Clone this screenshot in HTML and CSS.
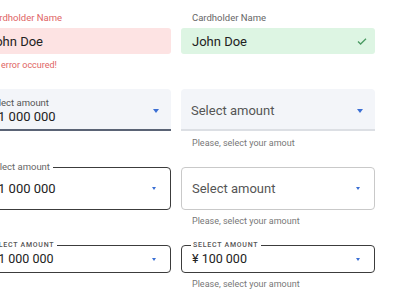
FILE: index.html
```html
<!DOCTYPE html>
<html lang="en">
<head>
    <meta charset="UTF-8" />
    <title>Input fields</title>
    <link rel="stylesheet" href="styles.css">
</head>
<body>
    <div class="sheet">
        <div class="row row-text">
            <div class="field error">
                <label class="top-label">Cardholder Name</label>
                <div class="plain-box">John Doe</div>
                <div class="helper">An error occured!</div>
            </div>
            <div class="field success">
                <label class="top-label">Cardholder Name</label>
                <div class="plain-box">
                    John Doe
                    <svg class="check" width="10" height="7" viewBox="0 0 10 7">
                        <polyline points="1,3.5 3.6,6 9,0.8" fill="none" stroke="#4b9a63" stroke-width="1.3" />
                    </svg>
                </div>
            </div>
        </div>

        <div class="row row-filled">
            <div class="field">
                <div class="filled-box active">
                    <div class="stack">
                        <span class="small-label">Select amount</span>
                        <span class="value">¥ 1 000 000</span>
                    </div>
                    <span class="arrow"></span>
                </div>
            </div>
            <div class="field">
                <div class="filled-box">
                    <span class="placeholder">Select amount</span>
                    <span class="arrow"></span>
                </div>
                <div class="helper">Please, select your amout</div>
            </div>
        </div>

        <div class="row row-outlined">
            <div class="field">
                <div class="outlined-box active">
                    <span class="notch-label">Select amount</span>
                    <span class="value">¥ 1 000 000</span>
                    <span class="arrow small"></span>
                </div>
            </div>
            <div class="field">
                <div class="outlined-box">
                    <span class="placeholder">Select amount</span>
                    <span class="arrow small"></span>
                </div>
                <div class="helper">Please, select your amount</div>
            </div>
        </div>

        <div class="row row-dense">
            <div class="field">
                <div class="outlined-box dense active">
                    <span class="notch-label caps">Select amount</span>
                    <span class="value">€ 1 000 000</span>
                    <span class="arrow small"></span>
                </div>
            </div>
            <div class="field">
                <div class="outlined-box dense active">
                    <span class="notch-label caps">Select amount</span>
                    <span class="value">¥ 100 000</span>
                    <span class="arrow small"></span>
                </div>
                <div class="helper">Please, select your amount</div>
            </div>
        </div>
    </div>
</body>
</html>
```

FILE: styles.css
```css
:root {
    --text-color: #222;
    --muted-color: #777;
    --error-color: #e06464;
    --arrow-color: #3b6fd4;
}

body {
    margin: 0;
    font-family: Roboto, Arial, sans-serif;
    color: var(--text-color);
    background: white;
    overflow: hidden;
}

.sheet {
    margin-left: -23px;
    padding-top: 12px;
    display: flex;
    flex-direction: column;
    gap: 18px;
}

.row {
    display: grid;
    grid-template-columns: 194px 194px;
    column-gap: 10px;
    align-items: start;
}

.top-label {
    display: block;
    font-size: 9.5px;
    line-height: 12px;
    color: #666;
    padding-left: 11px;
    margin-bottom: 4px;
}

.error .top-label,
.error .helper {
    color: var(--error-color);
}

.plain-box {
    height: 26px;
    border-radius: 3px;
    padding: 0 11px;
    display: flex;
    align-items: center;
    justify-content: space-between;
    font-size: 13px;
}

.error .plain-box {
    background: #fde3e3;
}

.success .plain-box {
    background: #ddf5e3;
}

.check {
    margin-right: -3px;
}

.helper {
    font-size: 9px;
    line-height: 12px;
    color: var(--muted-color);
    padding-left: 11px;
    margin-top: 5px;
}

.row-filled .helper {
    margin-top: 6px;
}

.filled-box {
    box-sizing: border-box;
    height: 42px;
    background: #f3f5f9;
    border-radius: 4px 4px 0 0;
    border-bottom: 2px solid #dcdfe4;
    padding: 3px 12px 0 10px;
    display: flex;
    align-items: center;
    justify-content: space-between;
}

.filled-box.active {
    border-bottom-color: #5a6375;
    padding-left: 11px;
}

.stack {
    display: flex;
    flex-direction: column;
}

.small-label {
    font-size: 9.5px;
    line-height: 12px;
    color: #555;
}

.value {
    font-size: 13px;
    line-height: 16px;
    color: var(--text-color);
}

.placeholder {
    font-size: 13px;
    color: #555;
}

.arrow {
    width: 0;
    height: 0;
    border-left: 3.5px solid transparent;
    border-right: 3.5px solid transparent;
    border-top: 4px solid var(--arrow-color);
}

.arrow.small {
    border-left-width: 2.5px;
    border-right-width: 2.5px;
    border-top-width: 3px;
    margin-right: 2px;
}

.outlined-box {
    position: relative;
    box-sizing: border-box;
    height: 43px;
    border: 1px solid #c9c9c9;
    border-radius: 4px;
    padding: 0 12px 0 10px;
    display: flex;
    align-items: center;
    justify-content: space-between;
}

.outlined-box.active {
    border-color: #3c3c3c;
}

.outlined-box.dense {
    height: 28px;
}

.outlined-box.dense .value {
    font-size: 12.5px;
}

.notch-label {
    position: absolute;
    top: -7px;
    left: 9px;
    padding: 0 3px 0 2px;
    background: white;
    font-size: 9.5px;
    line-height: 12px;
    color: #666;
}

.notch-label.caps {
    top: -5px;
    font-size: 7px;
    line-height: 9px;
    letter-spacing: 0.75px;
    text-transform: uppercase;
    font-weight: 500;
    color: #555;
}
```
